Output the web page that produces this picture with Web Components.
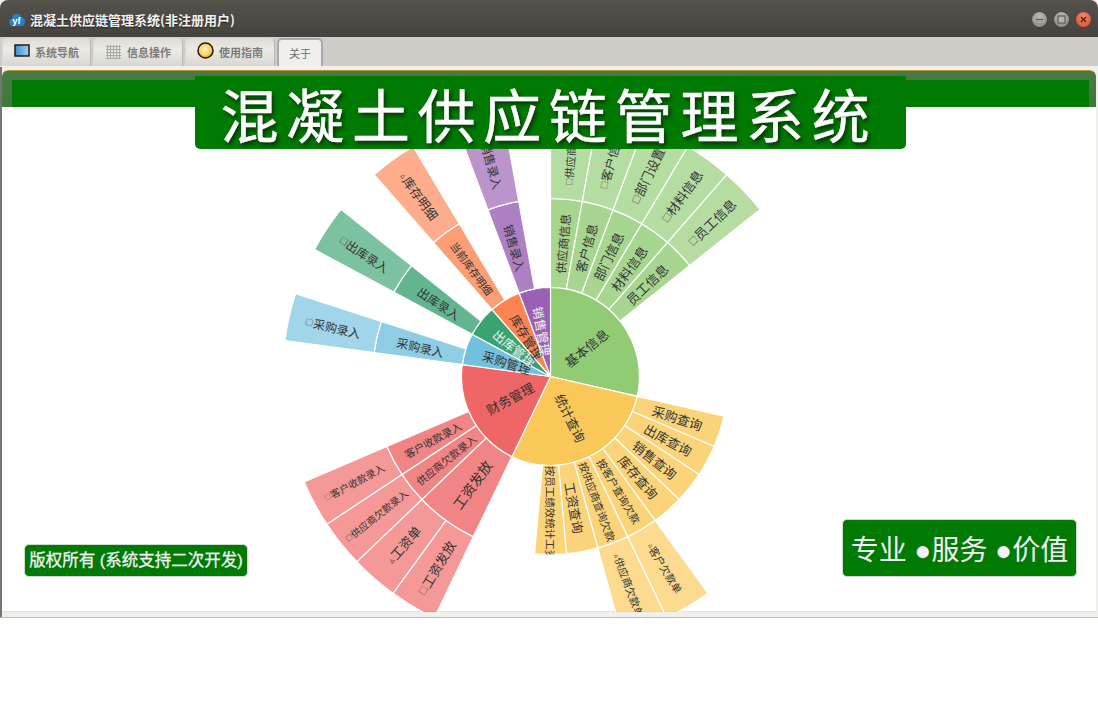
<!DOCTYPE html>
<html lang="zh">
<head>
<meta charset="utf-8">
<title>混凝土供应链管理系统</title>
<style>
    html, body { margin: 0; background: #fff; }
    body { width: 1098px; height: 719px; overflow: hidden; font-family: "Noto Sans CJK SC", "Liberation Sans", sans-serif; }
</style>
</head>
<body>
<app-window>
    <title-bar slot="title">混凝土供应链管理系统(非注册用户)</title-bar>
    <tab-bar slot="tabs">
        <tab-item icon="screen">系统导航</tab-item>
        <tab-item icon="grid">信息操作</tab-item>
        <tab-item icon="coin">使用指南</tab-item>
        <tab-item active>关于</tab-item>
    </tab-bar>
    <home-panel slot="body">
        <sun-burst></sun-burst>
        <big-banner slot="banner">混凝土供应链管理系统</big-banner>
        <green-badge slot="left" size="16.5" style="left:22px;top:474px;width:224px;height:33px;-webkit-text-stroke:.3px #f2f2f7">版权所有 (系统支持二次开发)</green-badge>
        <green-badge slot="right" size="28" style="left:840px;top:449px;width:235px;height:58px;padding-top:5px">专业 ●服务 ●价值</green-badge>
    </home-panel>
</app-window>

<script>
class AppWindow extends HTMLElement {
    constructor() {
        super();
        this.attachShadow({ mode: 'open' }).innerHTML = `
            <style>
                :host { display: flex; flex-direction: column; width: 1098px; height: 618px; background: #f0efeb; overflow: hidden; }
                .frame { flex: 1; display: flex; min-height: 0; padding: 0 2px 5px 2px; background: #efefeb; border-bottom: 1px solid #bdbdb9; box-shadow: inset 2px 0 0 #77766c; }
            </style>
            <slot name="title"></slot>
            <slot name="tabs"></slot>
            <div class="frame"><slot name="body"></slot></div>
        `;
    }
}

class TitleBar extends HTMLElement {
    constructor() {
        super();
        this.attachShadow({ mode: 'open' }).innerHTML = `
            <style>
                :host { display: flex; align-items: center; height: 37px; padding: 2px 7px 0 9px; background: linear-gradient(#55524c, #45433e); border-radius: 8px 8px 0 0; box-sizing: border-box; }
                svg.logo { width: 16px; height: 14px; margin-right: 5px; }
                .text { flex: 1; color: #f4f3ef; font: bold 13px "Noto Sans CJK SC", sans-serif; text-shadow: 0 1px 1px #222; }
                .btns { display: flex; gap: 7px; }
                .btn { width: 15px; height: 15px; border-radius: 50%; display: flex; align-items: center; justify-content: center; background: radial-gradient(circle at 50% 30%, #bcbbb6, #83827d); box-shadow: 0 0 1px #2d2c29; }
                .btn.close { background: radial-gradient(circle at 50% 30%, #f0876a, #dc4d27); }
                .btn svg { width: 9px; height: 9px; }
            </style>
            <svg class="logo" viewBox="0 0 16 14">
                <path d="M4 13 C1 13 0 11 0 9 C0 7 1.500 6 3 6 C3 3 5 1 8 1 C10.500 1 12 2.500 12.500 4.500 C14.500 4.500 16 6 16 8.500 C16 11 14.500 13 12 13 Z" fill="#2a7fc0"/>
                <text x="7.500" y="11" text-anchor="middle" font-family="Liberation Sans" font-weight="bold" font-size="9.500" fill="#fff">yf</text>
            </svg>
            <span class="text"><slot></slot></span>
            <div class="btns">
                <div class="btn"><svg viewBox="0 0 9 9"><path d="M1 4.500 H8" stroke="#5c5b57" stroke-width="1.200"/></svg></div>
                <div class="btn"><svg viewBox="0 0 9 9"><rect x="1" y="1" width="7" height="7" fill="#b5b4af" stroke="#5c5b57" stroke-width="1.200"/></svg></div>
                <div class="btn close"><svg viewBox="0 0 9 9"><path d="M2 2 L7 7 M7 2 L2 7" stroke="#4a1d10" stroke-width="1.300"/></svg></div>
            </div>
        `;
    }
}

class TabBar extends HTMLElement {
    constructor() {
        super();
        this.attachShadow({ mode: 'open' }).innerHTML = `
            <style>
                :host { display: flex; align-items: flex-end; gap: 2px; height: 30px; padding: 0 0 1px 2px; background: #d0cdc8; box-sizing: border-box; box-shadow: inset 0 -1px 0 #efefeb; }
            </style>
            <slot></slot>
        `;
    }
}

const TAB_ICONS = {
    screen: `<svg viewBox="0 0 16 14" width="16" height="14" style="margin-top:-3px"><rect x="1" y="1" width="14" height="11" fill="url(#s)" stroke="#111" stroke-width="1.400"/><defs><linearGradient id="s" x1="0" x2="1"><stop offset="0" stop-color="#3f8fce"/><stop offset="1" stop-color="#a6cfe8"/></linearGradient></defs></svg>`,
    grid: `<svg viewBox="0 0 16 14" width="16" height="14" style="margin-right:1px"><path d="M2.500 0 V14 M5.500 0 V14 M8.500 0 V14 M11.500 0 V14 M14.500 0 V14 M1 1.500 H16 M1 4.500 H16 M1 7.500 H16 M1 10.500 H16 M1 13.500 H16" stroke="#a8a8a8" stroke-width="1" fill="none"/></svg>`,
    coin: `<svg viewBox="0 0 17 17" width="17" height="17" style="margin-top:-3px"><defs><radialGradient id="c" cx=".45" cy=".4" r=".65"><stop offset="0" stop-color="#fdf1c4"/><stop offset=".6" stop-color="#f8d260"/><stop offset="1" stop-color="#e79a1e"/></radialGradient></defs><circle cx="8.500" cy="8.500" r="7.500" fill="url(#c)" stroke="#231a08" stroke-width="1.500"/><path d="M6 6.500 Q8 4 10 6.500 Q10 8 8.500 9 V10.500 M8.500 12 V13" fill="none" stroke="#f4e3ac" stroke-width="1.300"/></svg>`
};

class TabItem extends HTMLElement {
    constructor() {
        super();
        const icon = TAB_ICONS[this.getAttribute('icon')] || '';
        this.attachShadow({ mode: 'open' }).innerHTML = `
            <style>
                :host { display: flex; align-items: center; gap: 5px; height: 28px; padding: 0 11px 1px 11px; box-sizing: border-box; background: linear-gradient(#dfddd8, #ebeae6 40%, #d9d7d2); border: 1px solid #dcdad5; border-bottom: 0; border-right-color: #b9b7b2; border-radius: 5px 5px 0 0; color: #7d7b79; font: bold 11px "Noto Sans CJK SC", sans-serif; }
                :host([active]) { padding: 0 10px 1px 10px; background: #f0efeb; border: 2px solid #a9a8ae; border-bottom: 0; border-radius: 5px 5px 0 0; color: #6f6d6b; font-weight: normal; }
            </style>
            ${icon}<slot></slot>
        `;
    }
}

class HomePanel extends HTMLElement {
    constructor() {
        super();
        this.attachShadow({ mode: 'open' }).innerHTML = `
            <style>
                :host { display: block; position: relative; flex: 1; background: #fff; overflow: hidden; margin-top: 3px; border-radius: 6px 6px 0 0; box-shadow: inset 0 -1px 0 #e0e3da; }
                .stage { position: absolute; inset: 0; }
                .top { position: absolute; left: 0; right: 0; top: 0; height: 37px; box-sizing: border-box; padding: 9px 7px 0 10px; background: linear-gradient(#4a7a44, #3f7a3a); border-top: 1px solid #b8942e; border-radius: 6px 6px 0 0; }
                .bar { height: 27px; background: #007a03; }
            </style>
            <div class="stage"><slot></slot></div>
            <div class="top"><div class="bar"></div></div>
            <slot name="banner"></slot>
            <slot name="left"></slot>
            <slot name="right"></slot>
        `;
    }
}

class BigBanner extends HTMLElement {
    constructor() {
        super();
        this.attachShadow({ mode: 'open' }).innerHTML = `
            <style>
                :host { position: absolute; left: 193px; top: 6px; width: 711px; height: 73px; box-sizing: border-box; padding-right: 3px; display: flex; align-items: center; justify-content: center; background: #007a03; border-radius: 0 0 5px 5px; color: #fff; font: 58px/1 "Noto Sans CJK SC", sans-serif; letter-spacing: 7.700px; -webkit-text-stroke: .5px #fff; text-shadow: 2px 3px 4px #0a2a0a; }
            </style>
            <slot></slot>
        `;
    }
}

class GreenBadge extends HTMLElement {
    constructor() {
        super();
        const size = this.getAttribute('size');
        this.attachShadow({ mode: 'open' }).innerHTML = `
            <style>
                :host { position: absolute; display: flex; align-items: center; justify-content: center; box-sizing: border-box; background: #007a03; border: 1px solid #cfdccf; border-radius: 5px; color: #f2f2f7; font: ${size}px/1 "Liberation Sans", "Noto Sans CJK SC", sans-serif; white-space: nowrap; }
            </style>
            <slot></slot>
        `;
    }
}

// one unit = 360/35 deg, a = start unit, n = span in units
const UNIT = 360 / 35;
const GROUPS = [
    { color: '#91cc75', a: 0, n: 10, name: '基本信息', size: 13, kids: [
        { a: 0, name: '供应商信息', size: 12, leaf: '□供应商信息', leafSize: 11 },
        { a: 1, name: '客户信息', size: 12.500, leaf: '□客户信息', leafSize: 12 },
        { a: 2, name: '部门信息', size: 13, leaf: '□部门设置', leafSize: 13 },
        { a: 3, name: '材料信息', size: 13, leaf: '□材料信息', leafSize: 13 },
        { a: 4, name: '员工信息', size: 13, leaf: '□员工信息', leafSize: 13 }
    ].map(k => ({ ...k, n: 1 })) },
    { color: '#fac858', a: 10, n: 10, name: '统计查询', size: 13, kids: [
        { a: 10, name: '采购查询', size: 13 },
        { a: 11, name: '出库查询', size: 13 },
        { a: 12, name: '销售查询', size: 13 },
        { a: 13, name: '库存查询', size: 13 },
        { a: 14, name: '按客户查询欠款', size: 10.500, leaf: '▵客户欠款单', leafSize: 10.500 },
        { a: 15, name: '按供应商查询欠款', size: 10.500, leaf: '▵供应商欠款单', leafSize: 10.500 },
        { a: 16, name: '工资查询', size: 13 },
        { a: 17, name: '按员工绩效统计工资', size: 10.500, shift: 3 }
    ].map(k => ({ ...k, n: 1 })) },
    { color: '#ee6666', a: 20, n: 7, name: '财务管理', size: 13, kids: [
        { a: 20, n: 2, name: '工资发放', size: 14, leaves: [
            { a: 20, name: '□工资发放', size: 13 },
            { a: 21, name: '▵工资单', size: 13 }
        ] },
        { a: 22, n: 1, name: '供应商欠款录入', size: 10.500, leaf: '□供应商欠款录入', leafSize: 10 },
        { a: 23, n: 1, name: '客户收款录入', size: 10.500, leaf: '□客户收款录入', leafSize: 10 }
    ] },
    { color: '#73c0de', a: 27, n: 2, name: '采购管理', size: 12.500, kids: [
        { a: 27, n: 1, name: '采购录入', size: 12, leaf: '□采购录入', leafSize: 12 }
    ] },
    { color: '#3ba272', a: 29, n: 2, name: '出库管理', size: 12.500, light: true, kids: [
        { a: 29, n: 1, name: '出库录入', size: 12, leaf: '□出库录入', leafSize: 12 }
    ] },
    { color: '#fc8452', a: 31, n: 2, name: '库存管理', size: 12.500, kids: [
        { a: 31, n: 1, name: '当前库存明细', size: 10.500, leaf: '▵库存明细', leafSize: 12.500 }
    ] },
    { color: '#9a60b4', a: 33, n: 2, name: '销售管理', size: 12.500, light: true, kids: [
        { a: 33, n: 1, name: '销售录入', size: 12, leaf: '□销售录入', leafSize: 12 }
    ] }
];

const CX = 548.5, CY = 306.5; // centre, in panel coordinates
const R = [0, 89, 178, 268];

function pt(r, unit) {
    const t = unit * UNIT * Math.PI / 180;
    return [(CX + r * Math.sin(t)).toFixed(2), (CY - r * Math.cos(t)).toFixed(2)];
}

function sectorPath(r0, r1, a, n) {
    const large = n * UNIT > 180 ? 1 : 0;
    const p0 = pt(r1, a), p1 = pt(r1, a + n);
    if (r0 === 0) return `M${CX} ${CY} L${p0} A${r1} ${r1} 0 ${large} 1 ${p1} Z`;
    const p2 = pt(r0, a + n), p3 = pt(r0, a);
    return `M${p0} A${r1} ${r1} 0 ${large} 1 ${p1} L${p2} A${r0} ${r0} 0 ${large} 0 ${p3} Z`;
}

function label(text, ring, a, n, size, fill, shift = 0) {
    const mid = a + n / 2;
    const deg = mid * UNIT;
    const r = (ring === 0 ? 46 : (R[ring] + R[ring + 1]) / 2) + shift;
    const [x, y] = pt(r, mid);
    const rot = deg < 180.5 ? deg - 90 : deg - 270;
    const mark = /^[□▵]/.test(text) ? `<tspan font-size="${size * 0.68}">${text[0]}</tspan>${text.slice(1)}` : text;
    return `<text x="${x}" y="${y}" font-size="${size}" fill="${fill}" text-anchor="middle" dominant-baseline="central" transform="rotate(${rot.toFixed(2)} ${x} ${y})">${mark}</text>`;
}

class SunBurst extends HTMLElement {
    constructor() {
        super();
        let cells = '', texts = '', clips = '';
        for (const g of GROUPS) {
            cells += `<path d="${sectorPath(0, R[1], g.a, g.n)}" fill="${g.color}"/>`;
            for (const k of g.kids) {
                cells += `<path d="${sectorPath(R[1], R[2], k.a, k.n)}" fill="${g.color}" fill-opacity=".8"/>`;
                const clip = `c${g.a}-${k.a}`;
                clips += `<clipPath id="${clip}"><path d="${sectorPath(R[1], R[2], k.a, k.n)}"/></clipPath>`;
                texts += `<g clip-path="url(#${clip})">${label(k.name, 1, k.a, k.n, k.size, '#333', k.shift)}</g>`;
                const leaves = k.leaves || (k.leaf ? [{ a: k.a, name: k.leaf, size: k.leafSize, n: k.n }] : []);
                for (const l of leaves) {
                    const n = l.n || 1;
                    cells += `<path d="${sectorPath(R[2], R[3], l.a, n)}" fill="${g.color}" fill-opacity=".67"/>`;
                    texts += label(l.name, 2, l.a, n, l.size, '#333');
                }
            }
        }
        // root labels are drawn last so they overlap each other near the hub
        for (const g of GROUPS) {
            texts += label(g.name, 0, g.a, g.n, g.size, g.light ? '#eef3ee' : '#333');
        }
        this.attachShadow({ mode: 'open' }).innerHTML = `
            <style>
                :host { display: block; width: 100%; height: 100%; }
                svg { display: block; font-family: "Noto Sans CJK SC", sans-serif; }
                path { stroke: #fff; stroke-width: 1.200; }
                clipPath path { stroke: none; }
            </style>
            <svg width="1094" height="546" viewBox="0 0 1094 546">
                <defs>${clips}</defs>
                ${cells}
                ${texts}
            </svg>
        `;
    }
}

customElements.define('app-window', AppWindow);
customElements.define('title-bar', TitleBar);
customElements.define('tab-bar', TabBar);
customElements.define('tab-item', TabItem);
customElements.define('home-panel', HomePanel);
customElements.define('big-banner', BigBanner);
customElements.define('green-badge', GreenBadge);
customElements.define('sun-burst', SunBurst);
</script>
</body>
</html>
